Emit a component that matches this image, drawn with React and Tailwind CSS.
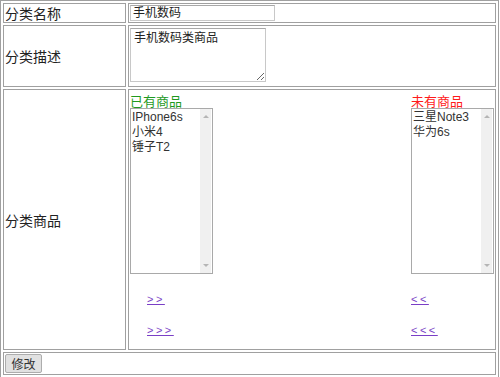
import React from 'react';

const cjk = "font-['Noto_Sans_CJK_SC',sans-serif]";
const mixed = "font-['Liberation_Sans','Noto_Sans_CJK_SC',sans-serif]";

function ListBox({ items }) {
  return (
    <div className="flex w-[83px] h-[166px] border border-[#a9a9a9] bg-white">
      <ul className={`flex-1 pl-[1px] pt-[1px] text-[12px] leading-[15px] text-[#333] ${mixed}`}>
        {items.map((it) => (
          <li key={it}>{it}</li>
        ))}
      </ul>
      {/* fake scrollbar */}
      <div className="w-[11px] mr-px bg-[#f0f0f0] flex flex-col justify-between items-center py-[6px]">
        <span className="w-0 h-0 border-l-[3px] border-r-[3px] border-b-[3px] border-l-transparent border-r-transparent border-b-[#b5b5b5]" />
        <span className="w-0 h-0 border-l-[3px] border-r-[3px] border-t-[3px] border-l-transparent border-r-transparent border-t-[#b5b5b5]" />
      </div>
    </div>
  );
}

function MoveLink({ children, className }) {
  return (
    <a href="#" className={`block w-fit text-[11px] leading-[14px] tracking-[2.5px] text-[#7a3fc6] underline ${mixed} ${className}`}>
      {children}
    </a>
  );
}

export default function App() {
  const cell = 'border border-[#a0a0a0] p-px leading-[16px]';
  const label = `${cell} w-[123px] text-[14px] text-[#222] ${cjk}`;

  return (
    <div className="w-[500px] h-[377px] bg-white">
      <table className="w-[499px] border-separate border-spacing-[2px] border border-[#a0a0a0]">
        <tbody>
          <tr>
            <td className={label}>分类名称</td>
            <td className={cell}>
              <input
                type="text"
                defaultValue="手机数码"
                className={`block w-[145px] h-[16px] px-[2px] border border-[#c8c8c8] border-t-[#a8a8a8] text-[12px] text-[#222] outline-none ${mixed}`}
              />
            </td>
          </tr>
          <tr>
            <td className={label}>分类描述</td>
            <td className={cell}>
              <textarea
                defaultValue="手机数码类商品"
                className={`block w-[136px] h-[54px] mt-px mb-[3px] px-[3px] py-[2px] border border-[#c8c8c8] border-t-[#a8a8a8] text-[12px] leading-[15px] text-[#222] outline-none ${mixed}`}
              />
            </td>
          </tr>
          <tr>
            <td className={label}>分类商品</td>
            <td className={`${cell} align-top`}>
              <div className="flex justify-between">
                <div className="flex flex-col">
                  <span className={`mt-[2px] text-[13px] leading-[15px] text-[#1f9a1f] ${cjk}`}>已有商品</span>
                  <ListBox items={['IPhone6s', '小米4', '锤子T2']} />
                  <MoveLink className="ml-[17px] mt-[18px]">&gt;&gt;</MoveLink>
                  <MoveLink className="ml-[17px] mt-[17px] mb-[11px]">&gt;&gt;&gt;</MoveLink>
                </div>
                <div className="flex flex-col w-[83px]">
                  <span className={`mt-[2px] text-[13px] leading-[15px] text-[#ff1a1a] ${cjk}`}>未有商品</span>
                  <ListBox items={['三星Note3', '华为6s']} />
                  <MoveLink className="mt-[18px]">&lt;&lt;</MoveLink>
                  <MoveLink className="mt-[17px]">&lt;&lt;&lt;</MoveLink>
                </div>
              </div>
            </td>
          </tr>
          <tr>
            <td className={cell} colSpan={2}>
              <button
                type="button"
                className={`block w-[37px] h-[19px] border border-[#adadad] bg-[#e1e1e1] rounded-[2px] text-[12px] leading-none text-[#333] ${cjk}`}
              >
                修改
              </button>
            </td>
          </tr>
        </tbody>
      </table>
    </div>
  );
}
